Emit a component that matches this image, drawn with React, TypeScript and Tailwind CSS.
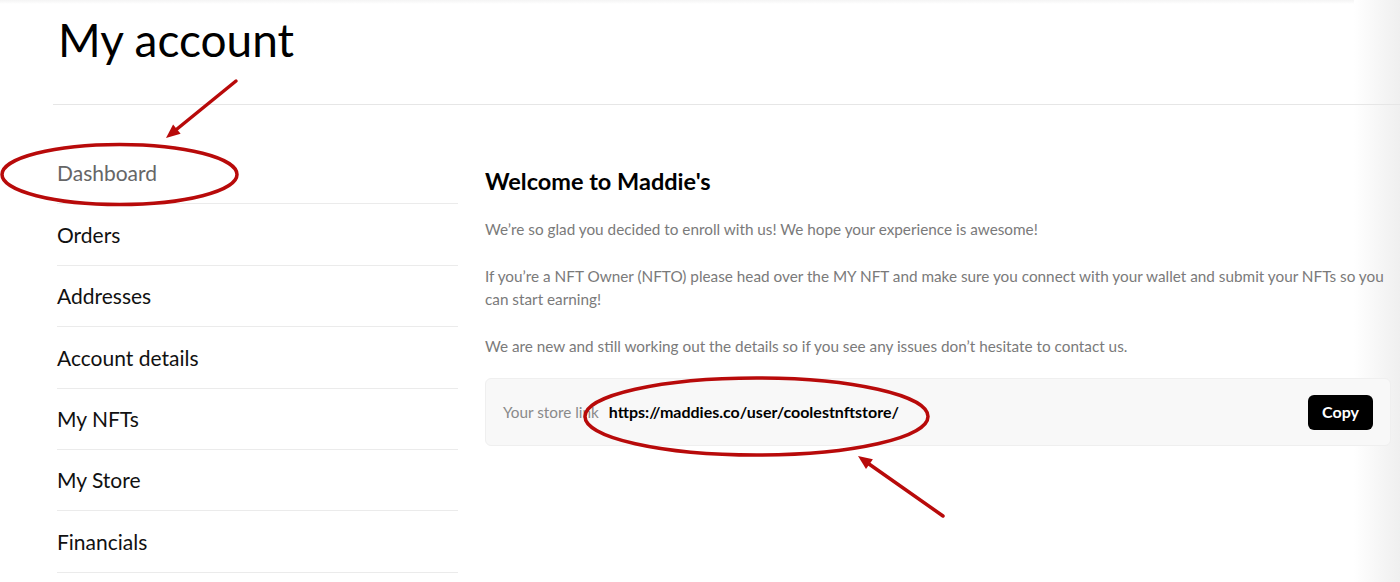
import React from 'react';

const navItems = ['Dashboard', 'Orders', 'Addresses', 'Account details', 'My NFTs', 'My Store', 'Financials'];

function Annotations() {
  const red = '#b80a0a';
  return (
    <svg className="absolute inset-0 pointer-events-none" width="1400" height="582" viewBox="0 0 1400 582">
      {/* dashboard ring + arrow */}
      <ellipse cx="119.5" cy="174.5" rx="117.5" ry="30" fill="none" stroke={red} strokeWidth="3.5" />
      <line x1="236" y1="81" x2="177" y2="129" stroke={red} strokeWidth="3.5" strokeLinecap="round" />
      <polygon points="166,138 180.6,133.8 173.1,124.5" fill={red} />
      {/* store link ring + arrow */}
      <ellipse cx="756.5" cy="416.5" rx="171.5" ry="38.5" fill="none" stroke={red} strokeWidth="3.5" />
      <line x1="943" y1="516" x2="869" y2="464" stroke={red} strokeWidth="3.5" strokeLinecap="round" />
      <polygon points="858,456 872.9,459.2 866,469" fill={red} />
    </svg>
  );
}

export default function App() {
  return (
    <div className="relative w-[1400px] h-[582px] overflow-hidden bg-white font-['Lato',sans-serif] text-[#111]">
      {/* screenshot edge shading */}
      <div className="absolute top-0 left-0 right-0 h-[4px] bg-gradient-to-b from-[#f4f4f4] to-white" />
      <div className="absolute top-0 bottom-0 right-0 w-[46px] bg-gradient-to-r from-white to-[#efefef]" />

      <div className="relative">
        <h1 className="pl-[58px] pt-[17px] text-[46px] leading-[46px] font-normal text-black">My account</h1>
        <div className="ml-[53px] mt-[41px] h-px bg-[#e6e6e6]" />

        <div className="flex mt-[38px]">
          {/* nav */}
          <nav className="ml-[57px] w-[401px] shrink-0">
            {navItems.map((item, i) => (
              <div
                key={item}
                className={
                  'h-[61.4px] flex items-center border-b border-[#ebebeb] text-[21px] ' +
                  (i === 0 ? 'text-[#666]' : 'text-[#111]')
                }
              >
                {item}
              </div>
            ))}
          </nav>

          {/* content */}
          <main className="ml-[27px] mr-[9px] flex-1 pt-[24px]">
            <h2 className="text-[23.5px] leading-[28px] font-bold text-black">Welcome to Maddie's</h2>
            <div className="mt-[23px] text-[15.3px] leading-[23px] text-[#7a7a7a] space-y-[24px]">
              <p>We’re so glad you decided to enroll with us! We hope your experience is awesome!</p>
              <p>
                If you’re a NFT Owner (NFTO) please head over the MY NFT and make sure you connect with your wallet and submit your NFTs so you can start earning!
              </p>
              <p>We are new and still working out the details so if you see any issues don’t hesitate to contact us.</p>
            </div>

            <div className="mt-[20px] h-[68px] flex items-center justify-between px-[17px] bg-[#f8f8f8] border border-[#efefef] rounded-md">
              <div className="flex items-center gap-[10px]">
                <span className="text-[15.3px] text-[#8a8a8a]">Your store link</span>
                <span className="text-[16px] font-bold text-black">https://maddies.co/user/coolestnftstore/</span>
              </div>
              <button className="h-[35px] w-[65px] rounded-md bg-black text-white text-[16px] font-bold">Copy</button>
            </div>
          </main>
        </div>
      </div>

      <Annotations />
    </div>
  );
}
